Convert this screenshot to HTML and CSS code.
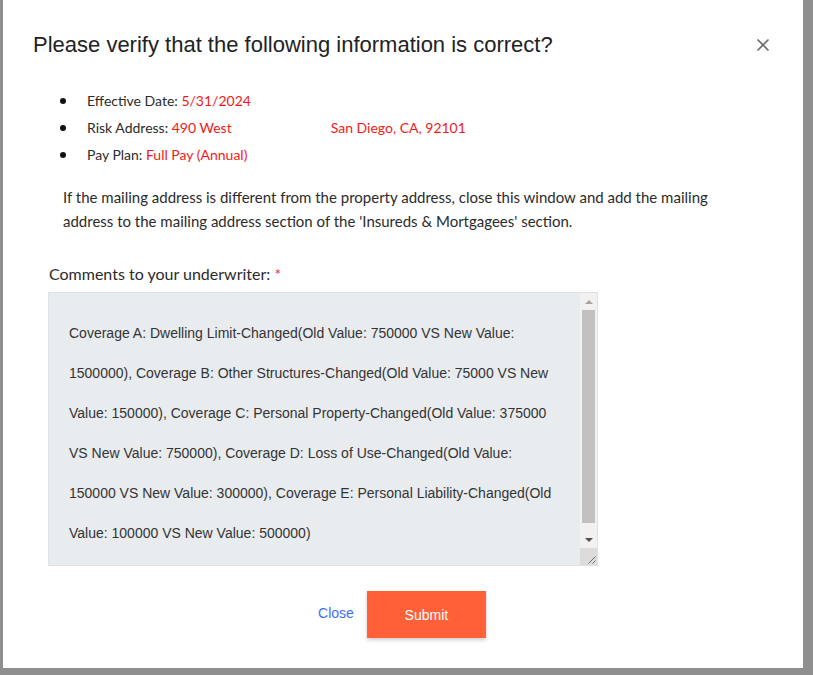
FILE: index.html
```html
<!DOCTYPE html>
<html lang="en">
<head>
<meta charset="utf-8">
<title>Verify information</title>
<link rel="stylesheet" href="styles.css">
</head>
<body>
<div class="overlay">
  <div class="modal">
    <div class="modal-header">
      <h2 class="modal-title">Please verify that the following information is correct?</h2>
      <button class="close-x" aria-label="Close">
        <svg width="14" height="14" viewBox="0 0 14 14"><path d="M1.5 1.5 L12.5 12.5 M12.5 1.5 L1.5 12.5" stroke="#6b6b6b" stroke-width="1.6" fill="none"/></svg>
      </button>
    </div>
    <div class="modal-body">
      <ul class="info-list">
        <li>Effective Date: <span class="val">5/31/2024</span></li>
        <li>Risk Address: <span class="val">490 West</span><span class="gap"></span><span class="val">San Diego, CA, 92101</span></li>
        <li>Pay Plan: <span class="val">Full Pay (Annual)</span></li>
      </ul>
      <p class="note">If the mailing address is different from the property address, close this window and add the mailing address to the mailing address section of the 'Insureds &amp; Mortgagees' section.</p>
      <label class="comment-label" for="comments">Comments to your underwriter: <span class="req">*</span></label>
      <div class="comments-wrap">
        <textarea id="comments" class="comments">Coverage A: Dwelling Limit-Changed(Old Value: 750000 VS New Value: 1500000), Coverage B: Other Structures-Changed(Old Value: 75000 VS New Value: 150000), Coverage C: Personal Property-Changed(Old Value: 375000 VS New Value: 750000), Coverage D: Loss of Use-Changed(Old Value: 150000 VS New Value: 300000), Coverage E: Personal Liability-Changed(Old Value: 100000 VS New Value: 500000)</textarea>
        <div class="fake-scroll" aria-hidden="true">
          <div class="sb-btn"><span class="arrow-up"></span></div>
          <div class="sb-track"><div class="sb-thumb"></div></div>
          <div class="sb-btn"><span class="arrow-down"></span></div>
          <div class="sb-corner">
            <svg width="17" height="17" viewBox="0 0 17 17"><path d="M15.5 8.5 L8.5 15.5 M15.5 12.5 L12.5 15.5" stroke="#6e6e6e" stroke-width="1" fill="none"/></svg>
          </div>
        </div>
      </div>
    </div>
    <div class="modal-footer">
      <a class="close-link" href="#">Close</a>
      <button class="submit-btn">Submit</button>
    </div>
  </div>
</div>
</body>
</html>
```

FILE: styles.css
```css
html, body {
  margin: 0;
  padding: 0;
}
body {
  background: #8f8f8f;
  width: 813px;
  height: 675px;
  overflow: hidden;
}
.overlay {
  padding-left: 3px;
}
.modal {
  width: 800px;
  height: 668px;
  background: #fff;
  box-sizing: border-box;
  display: flex;
  flex-direction: column;
}
.modal-header {
  display: flex;
  align-items: center;
  justify-content: space-between;
  padding: 32px 33px 0 30px;
}
.modal-title {
  margin: 0;
  font-family: "Liberation Sans", Arial, sans-serif;
  font-weight: normal;
  font-size: 22px;
  line-height: 26px;
  color: #222;
}
.close-x {
  border: 0;
  background: none;
  padding: 0;
  width: 14px;
  height: 14px;
  display: flex;
}
.modal-body {
  padding: 0 0 0 45px;
  font-family: Lato, "Open Sans", sans-serif;
  font-size: 15px;
  color: #2b2b2b;
}
.info-list {
  margin: 29px 0 0 0;
  padding-left: 12px;
  list-style: none;
  font-size: 14px;
}
.info-list li {
  line-height: 27px;
}
.info-list li::before {
  content: "";
  display: inline-block;
  vertical-align: middle;
  width: 6px;
  height: 6px;
  border-radius: 50%;
  background: #111;
  margin-right: 21px;
  position: relative;
  top: -1px;
}
.val {
  color: #f21a1a;
}
.gap {
  display: inline-block;
  width: 99px;
}
.note {
  margin: 17px 0 0 15px;
  width: 660px;
  line-height: 24px;
}
.comment-label {
  display: block;
  margin: 30px 0 0 1px;
  line-height: 22px;
  font-size: 16px;
}
.req {
  color: #e33;
}
.comments-wrap {
  position: relative;
  width: 550px;
  height: 274px;
  margin-top: 7px;
}
.comments {
  display: block;
  box-sizing: border-box;
  width: 550px;
  height: 274px;
  margin: 0;
  background: #e9ecef;
  border: 1px solid #dfe2e5;
  padding: 20px 37px 20px 20px;
  font-family: "Liberation Sans", Arial, sans-serif;
  font-size: 14px;
  line-height: 40px;
  color: #333;
  overflow: hidden;
  resize: none;
}
.fake-scroll {
  position: absolute;
  top: 1px;
  right: 1px;
  bottom: 1px;
  width: 17px;
  background: #f1f1f1;
  display: flex;
  flex-direction: column;
}
.sb-btn {
  height: 17px;
  flex: none;
  display: flex;
  align-items: center;
  justify-content: center;
}
.arrow-up {
  width: 0;
  height: 0;
  border-left: 4px solid transparent;
  border-right: 4px solid transparent;
  border-bottom: 4px solid #a3a3a3;
}
.arrow-down {
  width: 0;
  height: 0;
  border-left: 4px solid transparent;
  border-right: 4px solid transparent;
  border-top: 4px solid #505050;
}
.sb-track {
  flex: 1;
  padding: 0 2px;
}
.sb-thumb {
  height: 213px;
  background: #c1c1c1;
}
.sb-corner {
  height: 17px;
  flex: none;
  background: #dcdcdc;
  display: flex;
}
.modal-footer {
  display: flex;
  justify-content: center;
  align-items: center;
  gap: 13px;
  margin-top: 25px;
  padding-right: 2px;
}
.close-link {
  font-family: "Liberation Sans", Arial, sans-serif;
  font-size: 14px;
  color: #3d6ef7;
  text-decoration: none;
  margin-bottom: 4px;
}
.submit-btn {
  width: 119px;
  height: 47px;
  border: 0;
  background: #ff6038;
  color: #fff;
  font-family: "Liberation Sans", Arial, sans-serif;
  font-size: 14px;
  box-shadow: 0 2px 4px rgba(0,0,0,0.2);
}
```
